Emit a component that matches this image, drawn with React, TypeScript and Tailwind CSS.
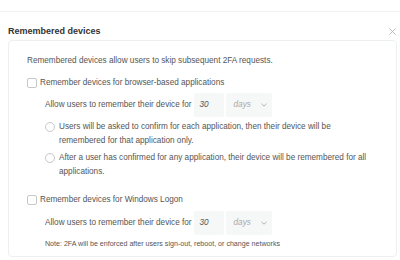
import React from "react";

function Checkbox({ label }: { label: string }) {
  return (
    <div className="flex items-center h-[14px]">
      <span className="w-[10px] h-[10px] border border-[#c8c8c8] rounded-[2px] bg-white shrink-0 mr-[3px]" />
      <span className="text-[8.2px] leading-[14px] text-[#555]">{label}</span>
    </div>
  );
}

function DurationRow() {
  return (
    <div className="flex items-center h-[24px] pl-[18px]">
      <span className="text-[8.2px] leading-[14px] text-[#555] mr-[2px]">Allow users to remember their device for</span>
      <div className="w-[30px] h-[24px] bg-[#f6f7f7] rounded-[2px] flex items-center pl-[6px] text-[8.2px] italic text-[#555]">30</div>
      <div className="w-[46px] h-[24px] ml-[2px] bg-[#f6f7f7] rounded-[2px] flex items-center pl-[8px] pr-[4px] justify-between text-[8.2px] italic text-[#aaa]">
        <span>days</span>
        <svg width="6" height="4" viewBox="0 0 6 4" className="mr-[1px]">
          <path d="M0.5 0.8 L3 3.2 L5.5 0.8" fill="none" stroke="#aaa" strokeWidth="0.9" />
        </svg>
      </div>
    </div>
  );
}

function Radio({ children }: { children: React.ReactNode }) {
  return (
    <div className="flex items-start pl-[18px]">
      <span className="w-[10px] h-[10px] mt-[0px] rounded-full border border-[#c8c8c8] bg-white shrink-0 mr-[4px]" />
      <span className="text-[8.2px] leading-[14px] text-[#555] mt-[-2px]">{children}</span>
    </div>
  );
}

export default function App() {
  return (
    <div className="w-[400px] h-[260px] bg-white overflow-hidden font-['Liberation_Sans',Arial,sans-serif]">
      <div className="h-[12px] border-b border-[#f1f1f1]" />
      <div className="flex items-center justify-between pl-[8px] pr-[4px] pt-[10px] h-[28px]">
        <span className="text-[9px] leading-[16px] font-bold text-[#333]">Remembered devices</span>
        <svg width="7" height="7" viewBox="0 0 7 7" className="mt-[0px]">
          <path d="M0.5 0.5 L6.5 6.5 M6.5 0.5 L0.5 6.5" stroke="#b5b5b5" strokeWidth="0.9" />
        </svg>
      </div>
      <div className="ml-[8px] mr-[3px] h-[217px] border border-[#edf0f0] rounded-[4px] pl-[18px] pr-[22px] pt-[13px]">
        <div className="text-[8.2px] leading-[14px] text-[#555]">
          Remembered devices allow users to skip subsequent 2FA requests.
        </div>
        <div className="mt-[8px]">
          <Checkbox label="Remember devices for browser-based applications" />
        </div>
        <div className="mt-[3px]">
          <DurationRow />
        </div>
        <div className="mt-[5px]">
          <Radio>
            Users will be asked to confirm for each application, then their device will be remembered for that application only.
          </Radio>
        </div>
        <div className="mt-[5px]">
          <Radio>
            After a user has confirmed for any application, their device will be remembered for all applications.
          </Radio>
        </div>
        <div className="mt-[14px]">
          <Checkbox label="Remember devices for Windows Logon" />
        </div>
        <div className="mt-[4px]">
          <DurationRow />
        </div>
        <div className="mt-[3px] pl-[18px] text-[7.1px] leading-[12px] text-[#555]">
          Note: 2FA will be enforced after users sign-out, reboot, or change networks
        </div>
      </div>
    </div>
  );
}
